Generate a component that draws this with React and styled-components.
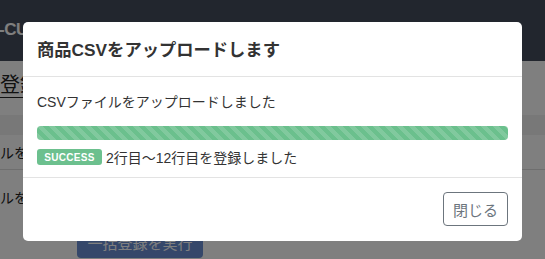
import styled, { createGlobalStyle } from 'styled-components';

const GlobalStyle = createGlobalStyle`
  html, body {
    margin: 0;
    padding: 0;
    background: #fff;
  }
  body {
    font-family: 'Liberation Sans', 'Noto Sans CJK JP', sans-serif;
    color: #333;
  }
`;

function App() {
  return (
    <>
      <GlobalStyle />
      <Page>
        <Navbar>
          <Brand>-CU</Brand>
        </Navbar>
        <Content>
          <Heading>登録</Heading>
          <Table>
            <HeadRow />
            <Row>ルを</Row>
            <Row tall>ルを</Row>
          </Table>
          <SubmitButton>一括登録を実行</SubmitButton>
        </Content>
        <Backdrop />
        <Modal>
          <ModalHeader>
            <ModalTitle>商品CSVをアップロードします</ModalTitle>
          </ModalHeader>
          <ModalBody>
            <Message>CSVファイルをアップロードしました</Message>
            <Progress>
              <ProgressBar style={{ width: '100%' }} />
            </Progress>
            <ResultLine>
              <Badge>SUCCESS</Badge>
              <span>2行目〜12行目を登録しました</span>
            </ResultLine>
          </ModalBody>
          <ModalFooter>
            <CloseButton type='button'>閉じる</CloseButton>
          </ModalFooter>
        </Modal>
      </Page>
    </>
  );
}

const Page = styled.div`
  position: relative;
  width: 545px;
  height: 259px;
  overflow: hidden;
  background: #fff;
`;

const Navbar = styled.header`
  height: 61px;
  background: #454c5c;
  display: flex;
  align-items: center;
  padding-bottom: 2px;
  box-sizing: border-box;
`;

const Brand = styled.span`
  color: #fff;
  font-weight: bold;
  font-size: 17px;
  margin-left: -1px;
  letter-spacing: -0.5px;
`;

const Content = styled.main`
  display: flex;
  flex-direction: column;
  align-items: flex-start;
  padding-top: 13px;
`;

const Heading = styled.h2`
  margin: 0;
  font-size: 20px;
  font-weight: normal;
  color: #222;
  line-height: 23px;
  border-bottom: 1px solid #222;
`;

const Table = styled.div`
  width: 100%;
  margin-top: 17px;
  display: flex;
  flex-direction: column;
`;

const HeadRow = styled.div`
  height: 20px;
  background: #f1f1f1;
`;

const Row = styled.div`
  display: flex;
  height: ${(p) => (p.tall ? '52px' : '35px')};
  align-items: ${(p) => (p.tall ? 'flex-start' : 'center')};
  padding-top: ${(p) => (p.tall ? '17px' : '0')};
  box-sizing: border-box;
  font-size: 14px;
  color: #222;
  border-bottom: ${(p) => (p.tall ? 'none' : '1px solid #dcdcdc')};
`;

const SubmitButton = styled.button`
  margin: 4px 0 0 77px;
  width: 126px;
  height: 32px;
  border: none;
  border-radius: 4px;
  background: #6a8fd4;
  color: #fff;
  font-family: inherit;
  font-size: 15px;
`;

const Backdrop = styled.div`
  position: absolute;
  inset: 0;
  background: rgba(0, 0, 0, 0.5);
`;

const Modal = styled.div`
  position: absolute;
  top: 22px;
  left: 23px;
  width: 499px;
  height: 219px;
  background: #fff;
  border-radius: 5px;
  display: flex;
  flex-direction: column;
  box-sizing: border-box;
`;

const ModalHeader = styled.div`
  height: 55px;
  padding: 0 14px 2px 14px;
  display: flex;
  align-items: center;
  border-bottom: 1px solid #e3e3e3;
  box-sizing: border-box;
`;

const ModalTitle = styled.h5`
  margin: 0;
  font-size: 17.3px;
  font-weight: bold;
  color: #333;
`;

const ModalBody = styled.div`
  height: 101px;
  padding: 16px 14px 0 14px;
  box-sizing: border-box;
  border-bottom: 1px solid #e3e3e3;
  display: flex;
  flex-direction: column;
`;

const Message = styled.p`
  margin: 0;
  font-size: 14px;
  line-height: 18px;
  color: #333;
`;

const Progress = styled.div`
  margin-top: 15px;
  height: 14px;
  border-radius: 4px;
  background: #e9ecef;
  overflow: hidden;
`;

const ProgressBar = styled.div`
  height: 100%;
  background-color: #6bc08d;
  background-image: linear-gradient(
    45deg,
    rgba(255, 255, 255, 0.15) 25%,
    transparent 25%,
    transparent 50%,
    rgba(255, 255, 255, 0.15) 50%,
    rgba(255, 255, 255, 0.15) 75%,
    transparent 75%,
    transparent
  );
  background-size: 12px 12px;
`;

const ResultLine = styled.div`
  margin-top: 7px;
  display: flex;
  align-items: center;
  gap: 4px;
  font-size: 14px;
  color: #333;
`;

const Badge = styled.span`
  display: inline-flex;
  align-items: center;
  justify-content: center;
  width: 65px;
  height: 16px;
  border-radius: 3px;
  background: #6cc08e;
  color: #fff;
  font-size: 10px;
  font-weight: bold;
  letter-spacing: 0.3px;
`;

const ModalFooter = styled.div`
  flex: 1;
  display: flex;
  justify-content: flex-end;
  align-items: flex-start;
  padding: 14px 14px 0 0;
`;

const CloseButton = styled.button`
  width: 65px;
  height: 34px;
  background: #fff;
  border: 1px solid #6c757d;
  border-radius: 4px;
  color: #6c757d;
  font-family: inherit;
  font-size: 15px;
  padding: 0;
`;

export default App;
